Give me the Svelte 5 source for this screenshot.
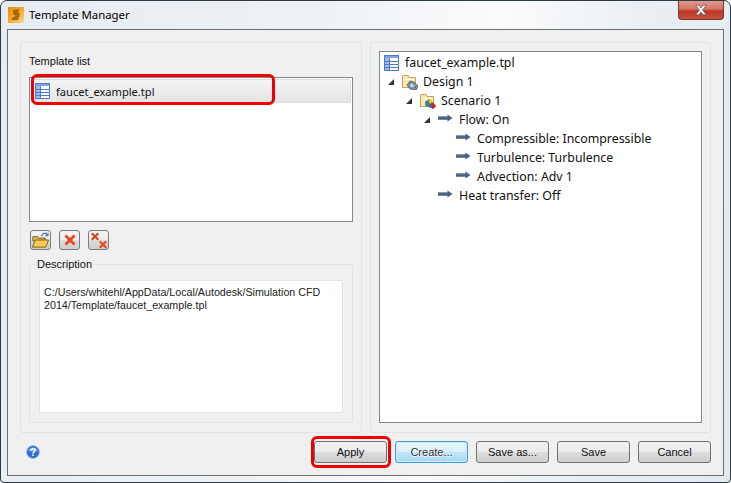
<script>
	const tree = [
		{ depth: 0, icon: 'file', label: 'faucet_example.tpl' },
		{ depth: 1, icon: 'design', label: 'Design 1', open: true },
		{ depth: 2, icon: 'scenario', label: 'Scenario 1', open: true },
		{ depth: 3, icon: 'arrow', label: 'Flow: On', open: true },
		{ depth: 4, icon: 'arrow', label: 'Compressible: Incompressible' },
		{ depth: 4, icon: 'arrow', label: 'Turbulence: Turbulence' },
		{ depth: 4, icon: 'arrow', label: 'Advection: Adv 1' },
		{ depth: 3, icon: 'arrow', label: 'Heat transfer: Off' }
	];
	const buttons = ['Apply', 'Create...', 'Save as...', 'Save', 'Cancel'];
</script>

{#snippet fileIcon()}
	<svg class="icon file" viewBox="0 0 15 16" width="15" height="16">
		<rect x="0.5" y="0.5" width="14" height="15" fill="#fff" stroke="#4f7cc0" />
		<rect x="1" y="1" width="13" height="2" fill="#7ea6de" />
		<rect x="1" y="3" width="4" height="12" fill="#9cbcea" />
		<path d="M1 6.500h13M1 9.500h13M1 12.500h13M5.500 3v12" stroke="#4f7cc0" />
	</svg>
{/snippet}

{#snippet folderIcon(kind)}
	<svg class="icon" viewBox="0 0 16 16" width="16" height="16">
		<path d="M0.500 2V13.500H13.500V3.500H7L6 1.500H1Z" fill="#fbe8b0" stroke="#c4a25c" />
		<path d="M1.500 5.500H12.500" stroke="#fffbe8" />
		{#if kind === 'design'}
			<path d="M5 11l3-4 4 1 4 4-2 4-6-1z" fill="#7d93a8" stroke="#43566e" stroke-width="0.8" />
			<circle cx="10" cy="11.500" r="1.700" fill="#d4dde6" />
			<path d="M13 13l2 2" stroke="#43566e" />
		{:else}
			<path d="M5 9l4-3 7 7-3 3-7-3z" fill="#2f74c8" />
			<path d="M8 7.500l3-1 2 3-3 1.500z" fill="#e8c21c" />
			<path d="M10 11l3-1.500 3 3.500-3 3z" fill="#d8201c" />
			<path d="M5 9l3 2-1 2.500-2-1z" fill="#38a848" />
		{/if}
	</svg>
{/snippet}

{#snippet arrowIcon()}
	<svg class="icon arrow" viewBox="0 0 15 8" width="15" height="8">
		<path d="M0 2.200h9.500V0.500L14.500 4 9.500 7.500V5.800H0z" fill="#4a6180" />
		<path d="M0 2.700h9.500" stroke="#8fa2ba" stroke-width="0.8" />
	</svg>
{/snippet}

<div class="window">
	<header class="titlebar">
		<svg class="app-icon" viewBox="0 0 16 16" width="16" height="16">
			<defs>
				<linearGradient id="appg" x1="0" y1="0" x2="1" y2="1">
					<stop offset="0" stop-color="#e88c08" />
					<stop offset="0.600" stop-color="#f4b040" />
					<stop offset="1" stop-color="#fbdca0" />
				</linearGradient>
			</defs>
			<rect width="16" height="16" fill="url(#appg)" />
			<path d="M5 3l7-1-2 3 2 2-2 6H3l2-3 3-1-3-2z" fill="#9a5408" opacity="0.800" />
		</svg>
		<span class="title">Template Manager</span>
		<button class="close" aria-label="Close">
			<svg viewBox="0 0 13 11" width="14" height="12">
				<path d="M1.500 1h3L6.500 3.500 8.500 1h3L8 5.500l3.500 4.500h-3L6.500 7.500 4.500 10h-3L5 5.500z" fill="#f4f4f4" stroke="#5a5a5a" stroke-width="0.700" />
			</svg>
		</button>
	</header>

	<div class="client">
		<div class="panels">
			<section class="panel left">
				<div class="list-label">Template list</div>
				<div class="list">
					<div class="list-item">
						{@render fileIcon()}
						<span>faucet_example.tpl</span>
						<div class="mark mark-item"></div>
					</div>
				</div>
				<div class="tools">
					<button class="tool" aria-label="Open">
						<svg viewBox="0 0 20 18" width="20" height="18">
							<path d="M2 5.500h5l1 1.500h7v3H2z" fill="#e0bc58" stroke="#7a5c18" />
							<path d="M1.500 16.500L4.500 9h14l-3 7.500z" fill="#f8cc50" stroke="#7a5c18" />
							<path d="M11 5c1-3 4-4 6-2" fill="none" stroke="#4c7ab0" stroke-width="1.400" />
							<path d="M18.500 1v4h-4z" fill="#4c7ab0" />
						</svg>
					</button>
					<button class="tool" aria-label="Delete">
						<svg viewBox="0 0 12 12" width="12" height="12">
							<path d="M0.500 2.500L2.500 0.500 6 4 9.500 0.500 11.500 2.500 8 6 11.500 9.500 9.500 11.500 6 8 2.500 11.500 0.500 9.500 4 6z" fill="#e4481c" />
						</svg>
					</button>
					<button class="tool" aria-label="Delete all">
						<svg viewBox="0 0 18 18" width="18" height="18">
							<path d="M1 3L2.500 1.500 5 4 7.500 1.500 9 3 6.500 5.500 9 8 7.500 9.500 5 7 2.500 9.500 1 8 3.500 5.500z" fill="#d8401c" />
							<path d="M9 11L10.500 9.500 13 12 15.500 9.500 17 11 14.500 13.500 17 16 15.500 17.500 13 15 10.500 17.500 9 16 11.500 13.500z" fill="#e4481c" />
						</svg>
					</button>
				</div>
				<fieldset class="desc">
					<legend>Description</legend>
					<div class="desc-text">C:/Users/whitehl/AppData/Local/Autodesk/Simulation CFD 2014/Template/faucet_example.tpl</div>
				</fieldset>
			</section>

			<section class="panel right">
				<div class="tree">
					{#each tree as row}
						<div class="row" style="padding-left: {row.depth * 18}px">
							{#if row.open}<span class="expander"></span>{/if}
							{#if row.icon === 'file'}
								{@render fileIcon()}
							{:else if row.icon === 'arrow'}
								{@render arrowIcon()}
							{:else}
								{@render folderIcon(row.icon)}
							{/if}
							<span class="row-label">{row.label}</span>
						</div>
					{/each}
				</div>
			</section>
		</div>

		<footer class="footer">
			<svg class="help" viewBox="0 0 14 14" width="14" height="14">
				<circle cx="7" cy="7" r="6.500" fill="#2f6fd0" stroke="#a8c4ec" />
				<path d="M2 5.500A5.500 5 0 0 1 12 5.500Q7 8 2 5.500z" fill="#7aa8ea" />
				<text x="7" y="10.500" text-anchor="middle" class="help-q">?</text>
			</svg>
			<div class="actions">
				{#each buttons as b}
					<button class="btn" class:focused={b === 'Create...'}>
						{b}
						{#if b === 'Apply'}<div class="mark mark-apply"></div>{/if}
					</button>
				{/each}
			</div>
		</footer>
	</div>
</div>

<style>
	:global(body) {
		margin: 0;
		background: #fff;
		font-family: 'Noto Sans', 'Open Sans', sans-serif;
		font-size: 12px;
		color: #111;
	}

	.window {
		box-sizing: border-box;
		width: 731px;
		height: 483px;
		display: flex;
		flex-direction: column;
		padding: 0 6px 6px;
		background: linear-gradient(100deg, #e6ecf1 0%, #eef2f5 40%, #fafbfc 62%, #e9eff3 80%, #e3eaef 100%);
		border: 1px solid #2c3a44;
		border-radius: 7px 7px 4px 4px;
		position: relative;
	}

	.titlebar {
		height: 28px;
		flex: none;
		display: flex;
		align-items: center;
		margin-left: 1px;
	}

	.app-icon {
		margin-right: 5px;
	}

	.title {
		font-size: 11.400px;
		color: #000;
		position: relative;
		top: -1px;
	}

	.close {
		position: absolute;
		top: 0;
		right: 6px;
		width: 46px;
		height: 19px;
		padding: 0;
		border: 1px solid #7a3630;
		border-top: none;
		border-radius: 0 0 4px 4px;
		background: linear-gradient(#e09a8c 0%, #d27566 45%, #bd3426 55%, #c8513f 100%);
		display: flex;
		align-items: center;
		justify-content: center;
	}

	.client {
		flex: 1;
		display: flex;
		flex-direction: column;
		background: #f0f0f0;
		border: 1px solid #6e6e6e;
		padding: 12px 12px 0 12px;
		min-height: 0;
	}

	.panels {
		height: 391px;
		flex: none;
		display: flex;
		gap: 8px;
	}

	.panel {
		box-sizing: border-box;
		border: 1px solid #dde4ea;
		border-radius: 3px;
		display: flex;
		flex-direction: column;
	}

	.left {
		width: 342px;
		padding: 0 8px 9px 8px;
	}

	.right {
		width: 341px;
		padding: 8px 8px 9px 8px;
	}

	.list-label {
		height: 34px;
		line-height: 36px;
		font-family: 'Liberation Sans', sans-serif;
		font-size: 11px;
	}

	.list {
		box-sizing: border-box;
		height: 145px;
		flex: none;
		background: #fff;
		border: 1px solid #828790;
		padding: 1px;
	}

	.list-item {
		position: relative;
		box-sizing: border-box;
		height: 24px;
		display: flex;
		align-items: center;
		padding-left: 3px;
		background: linear-gradient(#f4f4f4, #e4e4e4);
		border: 1px solid #dcdcdc;
		border-radius: 2px;
		font-size: 11.100px;
	}

	.mark {
		position: absolute;
		box-sizing: border-box;
		border: 3px solid #f00000;
		border-radius: 6px;
		pointer-events: none;
	}

	.mark-item {
		left: -1px;
		top: -6px;
		width: 244px;
		height: 31px;
	}

	.mark-apply {
		left: -4px;
		top: -6px;
		width: 80px;
		height: 32px;
	}

	.tools {
		display: flex;
		gap: 8px;
		padding: 8px 0 0 1px;
		height: 36px;
		box-sizing: border-box;
		flex: none;
	}

	.tool {
		width: 21px;
		height: 20px;
		padding: 0;
		border: 1px solid #7a7a7a;
		border-radius: 3px;
		background: linear-gradient(#f4f4f4 0%, #ececec 50%, #d8d8d8 55%, #cfcfcf 100%);
		display: flex;
		align-items: center;
		justify-content: center;
	}

	.desc {
		flex: 1;
		min-height: 0;
		margin: 0;
		padding: 9px 9px 9px 9px;
		border: 1px solid #dde4ea;
		border-radius: 3px;
		display: flex;
		flex-direction: column;
	}

	.desc legend {
		padding: 0 1px;
		margin-left: -3px;
		font-family: 'Liberation Sans', sans-serif;
		font-size: 11px;
		line-height: 13px;
	}

	.desc-text {
		flex: 1;
		box-sizing: border-box;
		background: #fff;
		border: 1px solid #dfe5ea;
		padding: 5px 4px;
		font-family: 'Liberation Sans', Arial, sans-serif;
		font-size: 10.700px;
		line-height: 13px;
		color: #222;
	}

	.tree {
		flex: 1;
		background: #fff;
		border: 1px solid #828790;
		padding: 1px 4px;
	}

	.row {
		height: 19.070px;
		display: flex;
		align-items: center;
		font-size: 12.350px;
		position: relative;
	}

	.expander {
		position: absolute;
		margin-left: -14px;
		width: 0;
		height: 0;
		margin-top: 1px;
		border-left: 6px solid transparent;
		border-bottom: 6px solid #333;
	}

	.icon {
		flex: none;
		margin-right: 5px;
	}

	.file,
	.arrow {
		margin-right: 6px;
	}

	.arrow {
		margin-top: -3px;
	}

	.row-label {
		white-space: nowrap;
	}

	.footer {
		flex: 1;
		display: flex;
		align-items: flex-start;
		justify-content: space-between;
		padding: 8px 0 0 6px;
	}

	.help {
		margin-top: 4px;
	}

	.help-q {
		font-family: 'Liberation Sans', sans-serif;
		font-size: 10px;
		font-weight: bold;
		fill: #fff;
	}

	.actions {
		display: flex;
		gap: 8px;
	}

	.btn {
		position: relative;
		box-sizing: border-box;
		width: 73px;
		height: 22px;
		padding: 0;
		font-family: 'Liberation Sans', sans-serif;
		font-size: 11px;
		color: #111;
		border: 1px solid #707070;
		border-radius: 3px;
		background: linear-gradient(#f2f2f2 0%, #ebebeb 50%, #dddddd 52%, #cfcfcf 100%);
	}

	.btn.focused {
		border-color: #3c9fd8;
		background: linear-gradient(#eaf6fd 0%, #d9f0fc 50%, #bee6fd 52%, #a7d9f5 100%);
		box-shadow: inset 0 0 0 1px #c8ecfb;
		color: #2a2a2a;
		text-shadow: 0 0 2px #fff, 0 0 1px #fff, 0 1px 1px #fff;
	}
</style>
